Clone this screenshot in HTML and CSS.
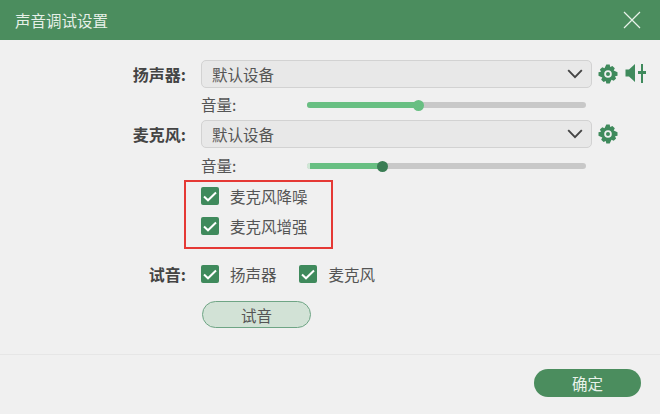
FILE: index.html
```html
<!DOCTYPE html>
<html lang="zh">
<head>
<meta charset="utf-8">
<title>声音调试设置</title>
<link rel="stylesheet" href="styles.css">
</head>
<body>
<div class="dialog">
  <header class="titlebar">
    <span class="title">声音调试设置</span>
    <svg class="close" width="18" height="18" viewBox="0 0 18 18"><path d="M1 1L17 17M17 1L1 17" stroke="#e8f2ea" stroke-width="1.2" fill="none"/></svg>
  </header>
  <main class="body">
    <div class="row row-select">
      <span class="label">扬声器:</span>
      <div class="select"><span>默认设备</span>
        <svg class="chev" width="16" height="10" viewBox="0 0 16 10"><path d="M1.2 1.2L8 8.2L14.8 1.2" stroke="#444" stroke-width="1.9" fill="none"/></svg>
      </div>
      <svg class="gear" width="20" height="20" viewBox="0 0 20 20"><use href="#gear"/></svg>
      <svg class="mixer" width="22" height="20" viewBox="0 0 22 20"><path d="M0.5 5.5H4L10 0V18L4 12.5H0.5Z" fill="#3f8a5c"/><path d="M17 0V19" stroke="#3f8a5c" stroke-width="2"/><path d="M13 8.5H21" stroke="#3f8a5c" stroke-width="3"/></svg>
    </div>
    <div class="row row-vol row-vol-a">
      <span class="vol-label">音量:</span>
      <div class="track"><div class="fill fill-a"></div><div class="thumb thumb-light"></div></div>
    </div>
    <div class="row row-select">
      <span class="label">麦克风:</span>
      <div class="select"><span>默认设备</span>
        <svg class="chev" width="16" height="10" viewBox="0 0 16 10"><path d="M1.2 1.2L8 8.2L14.8 1.2" stroke="#444" stroke-width="1.9" fill="none"/></svg>
      </div>
      <svg class="gear" width="20" height="20" viewBox="0 0 20 20"><use href="#gear"/></svg>
    </div>
    <div class="row row-vol row-vol-b">
      <span class="vol-label">音量:</span>
      <div class="track"><div class="fill fill-b"></div><div class="thumb thumb-dark"></div></div>
    </div>
    <div class="options">
      <div class="redbox"></div>
      <label class="check"><span class="box"><svg width="14" height="11" viewBox="0 0 14 11"><path d="M1 5.5L5 9.3L13 1.5" stroke="#fff" stroke-width="2" fill="none"/></svg></span>麦克风降噪</label>
      <label class="check"><span class="box"><svg width="14" height="11" viewBox="0 0 14 11"><path d="M1 5.5L5 9.3L13 1.5" stroke="#fff" stroke-width="2" fill="none"/></svg></span>麦克风增强</label>
    </div>
    <div class="row row-test">
      <span class="label">试音:</span>
      <label class="check inline"><span class="box"><svg width="14" height="11" viewBox="0 0 14 11"><path d="M1 5.5L5 9.3L13 1.5" stroke="#fff" stroke-width="2" fill="none"/></svg></span>扬声器</label>
      <label class="check inline"><span class="box"><svg width="14" height="11" viewBox="0 0 14 11"><path d="M1 5.5L5 9.3L13 1.5" stroke="#fff" stroke-width="2" fill="none"/></svg></span>麦克风</label>
    </div>
    <div class="test-wrap"><button class="btn-test">试音</button></div>
  </main>
  <footer class="footer"><button class="btn-ok">确定</button></footer>
</div>
<svg class="defs" width="0" height="0"><defs>
  <g id="gear">
    <path fill="#3f8a5c" fill-rule="evenodd" d="M8.3 0.5H11.7L12.2 3L14.4 1.9L16.8 4.3L15.7 6.5L19.5 8.3V11.7L17 12.2L18.1 14.4L15.7 16.8L13.5 15.7L11.7 19.5H8.3L7.8 17L5.6 18.1L3.2 15.7L4.3 13.5L0.5 11.7V8.3L3 7.8L1.9 5.6L4.3 3.2L6.5 4.3Z M10 6.2A3.8 3.8 0 1 0 10 13.8A3.8 3.8 0 1 0 10 6.2Z"/>
    <circle cx="10" cy="10" r="2" fill="#3f8a5c"/>
  </g>
</defs></svg>
</body>
</html>
```
FILE: styles.css
```css
* { box-sizing: border-box; }
html, body { margin: 0; padding: 0; }
body {
  width: 660px;
  height: 414px;
  overflow: hidden;
  background: #f0f0f0;
  font-family: "Noto Sans CJK SC", "Liberation Sans", sans-serif;
  color: #555;
  font-size: 15.5px;
}
.dialog { width: 660px; height: 414px; display: flex; flex-direction: column; }
.titlebar {
  height: 40px;
  flex: none;
  background: #4b8d5e;
  display: flex;
  align-items: center;
  justify-content: space-between;
  padding: 0 19px 0 15px;
  color: #e6f0e8;
}
.title { font-size: 15.5px; }
.body { flex: 1; padding-top: 20px; }
.row { display: flex; align-items: center; }
.row-select { height: 28px; }
.row-vol-a { height: 32px; padding-top: 2px; }
.row-vol-b { height: 33px; padding-top: 3px; }
.label {
  width: 186px;
  text-align: right;
  font-weight: 700;
  font-size: 16px;
  color: #444;
  margin-right: 15px;
  line-height: 20px;
}
.select {
  width: 391px;
  height: 28px;
  background: #e8e8e8;
  border: 1px solid #d2d2d2;
  border-radius: 5px;
  display: flex;
  align-items: center;
  justify-content: space-between;
  padding: 0 8px 0 10px;
  color: #555;
}
.gear { margin-left: 6px; }
.mixer { margin-left: 7px; }
.vol-label { margin-left: 201px; width: 106px; color: #555; padding-bottom: 2px; }
.track { position: relative; width: 279px; height: 6px; background: #c8c8c8; border-radius: 3px; }
.fill { height: 6px; background: #68bf82; border-radius: 3px; }
.fill-a { width: 112px; }
.fill-b { width: 75px; background: linear-gradient(to right, #cfe8d6 3px, #68bf82 3px); }
.thumb { position: absolute; top: -2.5px; width: 11px; height: 11px; border-radius: 50%; }
.thumb-light { left: 106px; background: #68bf82; }
.thumb-dark { left: 70px; background: #3a7d54; }
.options {
  position: relative;
  height: 78px;
  padding-left: 201px;
  display: flex;
  flex-direction: column;
}
.redbox {
  position: absolute;
  left: 184px;
  top: -1px;
  width: 149px;
  height: 69px;
  border: 2px solid #e53935;
}
.check { display: flex; align-items: center; height: 30px; color: #555; }
.box {
  width: 18px;
  height: 18px;
  background: #3f8a5c;
  border-radius: 2px;
  display: flex;
  align-items: center;
  justify-content: center;
  margin-right: 11px;
  flex: none;
}
.row-test { height: 30px; }
.label + .check.inline { margin-right: 22px; }
.inline + .inline .box { margin-right: 12px; }
.test-wrap { padding: 12px 0 0 202px; }
.btn-test {
  width: 109px;
  height: 27px;
  background: #d2e2d6;
  border: 1px solid #6fa585;
  border-radius: 14px;
  font: inherit;
  color: #555;
  padding: 0;
}
.footer {
  height: 60px;
  flex: none;
  border-top: 1px solid #e6e6e6;
  display: flex;
  justify-content: flex-end;
  padding: 14px 19px 0 0;
}
.btn-ok {
  width: 107px;
  height: 28px;
  background: #4b8d5e;
  border: 0;
  border-radius: 14px;
  color: #e8f2ea;
  font: inherit;
  padding: 0;
}
.defs { position: absolute; }
```
